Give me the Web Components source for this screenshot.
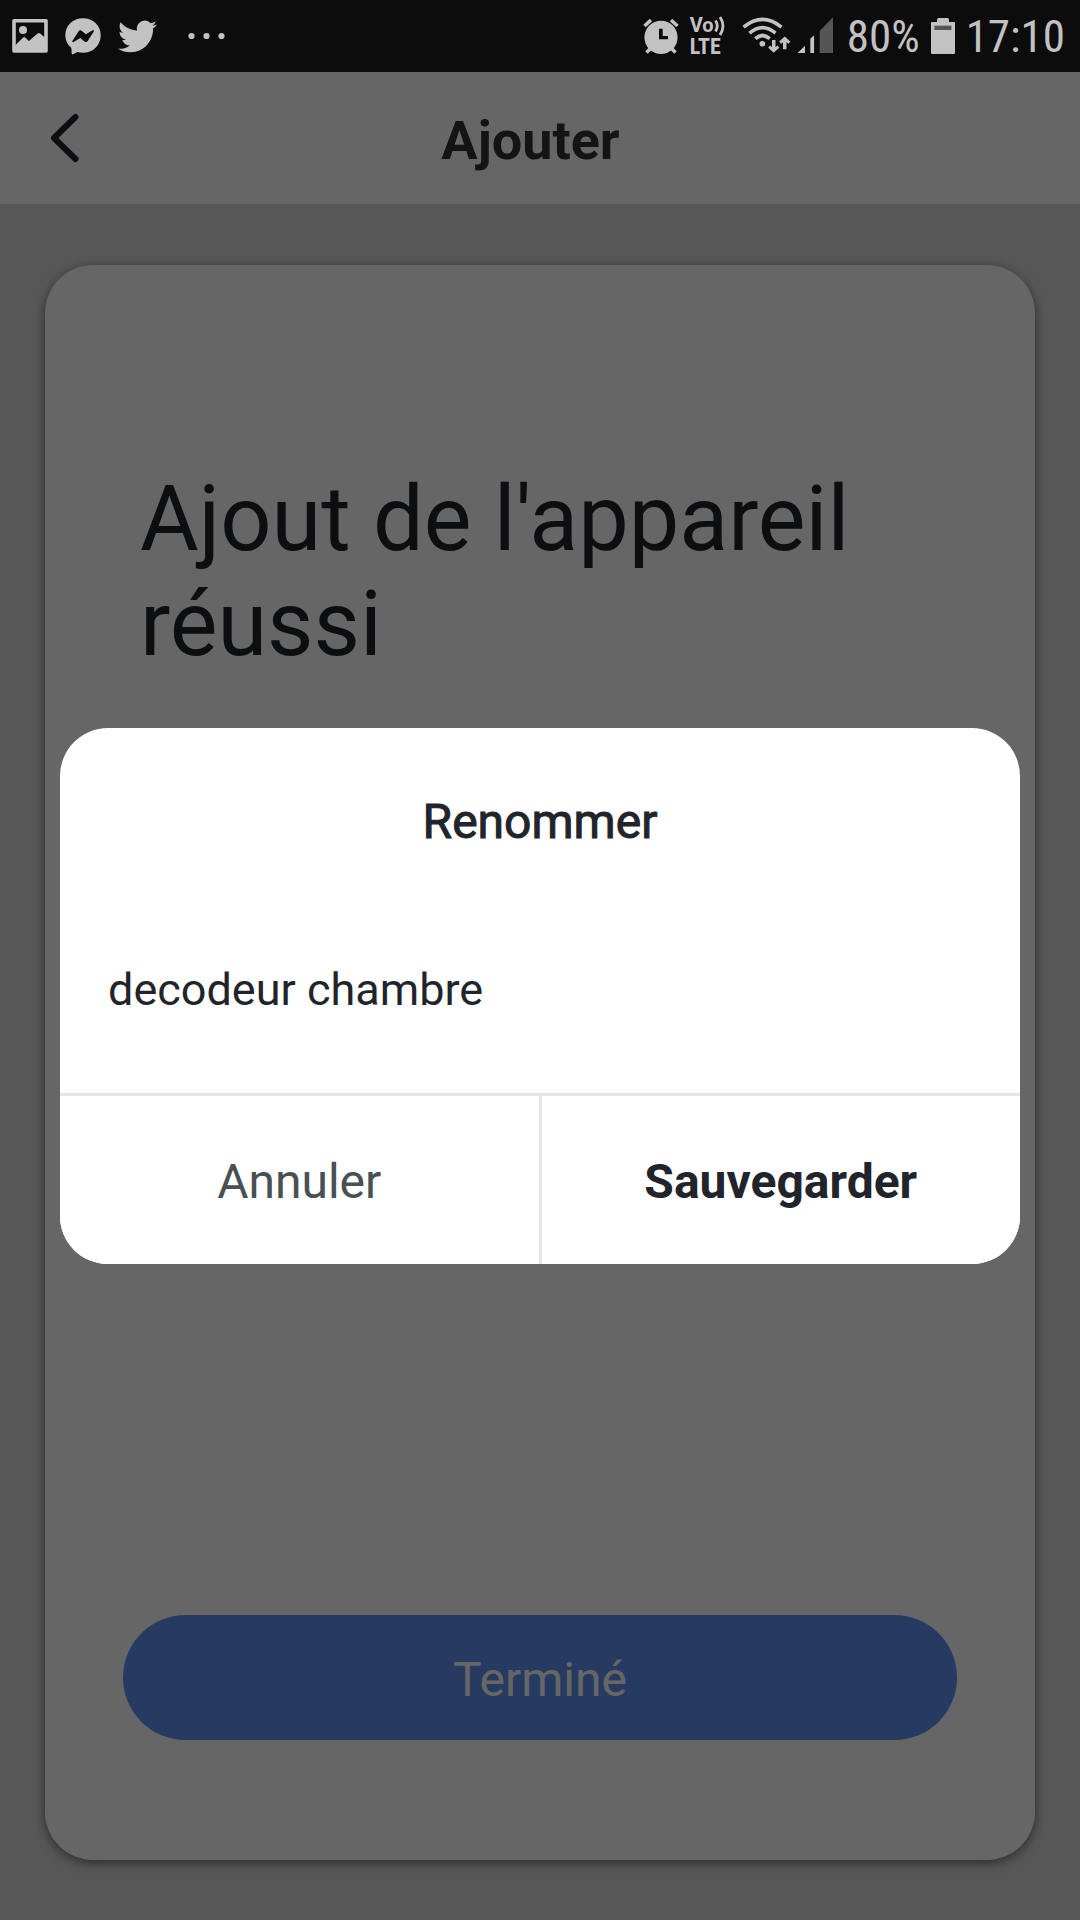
<!DOCTYPE html>
<html lang="fr">
<head>
<meta charset="utf-8">
<meta name="viewport" content="width=device-width, initial-scale=1">
<title>Ajouter</title>
<style>
  html, body { margin: 0; }
  body { font-family: Roboto, "Noto Sans", sans-serif; color: #22242c; }
</style>
</head>
<body>
<app-screen>
  <status-bar slot="status" battery="80%" time="17:10"></status-bar>
  <nav-header slot="header">Ajouter</nav-header>
  <result-card action="Terminé">Ajout de l'appareil réussi</result-card>
  <rename-dialog slot="overlay" value="decodeur chambre" cancel="Annuler" confirm="Sauvegarder">Renommer</rename-dialog>
</app-screen>

<script>
const define = (name, render) => customElements.define(name, class extends HTMLElement {
  constructor() {
    super();
    this.attachShadow({ mode: 'open' });
  }
  connectedCallback() {
    this.shadowRoot.innerHTML = render(this);
  }
});

define('app-screen', () => `
  <style>
    :host { display: flex; flex-direction: column; min-height: 100vh; background: #dadada; }
    .stage { flex: 1; display: grid; }
    .page, .scrim { grid-area: 1 / 1; }
    .page { display: flex; flex-direction: column; }
    main { flex: 1; display: flex; flex-direction: column; padding: 61px 45px 60px; }
    main ::slotted(*) { flex: 1; }
    .scrim { z-index: 1; display: flex; flex-direction: column; justify-content: center; padding: 0 60px; background: rgba(0, 0, 0, .6); }
  </style>
  <slot name="status"></slot>
  <div class="stage">
    <div class="page">
      <slot name="header"></slot>
      <main><slot></slot></main>
    </div>
    <div class="scrim"><slot name="overlay"></slot></div>
  </div>`);

define('status-bar', el => `
  <style>
    :host { display: flex; justify-content: space-between; align-items: center; height: 72px; padding: 0 15px 0 12px; background: #0c0c0c; color: #c2c2c2; }
    .group { display: flex; align-items: center; }
    .apps { gap: 17px; }
    .system { gap: 11px; }
    svg { display: block; flex: none; fill: currentColor; overflow: visible; }
    .line { fill: none; stroke: currentColor; stroke-width: 3.6; }
    .dim { fill: #555; }
    .hole { fill: #0c0c0c; }
    .more { margin-left: 14px; }
    .volte { width: 36px; font-size: 20px; font-weight: 700; line-height: 21px; }
    .volte span { display: flex; align-items: center; }
    .volte .lte { font-family: "Roboto Condensed", Roboto, sans-serif; font-size: 22px; }
    .text { font-family: "Roboto Condensed", Roboto, sans-serif; font-size: 45px; line-height: 52px; padding-top: 2px; }
    .wifi { margin-left: 5px; }
    .signal { margin: 0 2px 0 -5px; }
  </style>
  <div class="group apps">
    <svg width="36" height="36" viewBox="0 0 36 36"><path class="line" stroke-linejoin="round" d="M2 2.7h32v30.3H2z"/><circle cx="11" cy="12" r="4"/><path d="M3 27.5l8.2-8q1-.9 2 0l3.7 3.6 8.7-7.6q1.3-1.2 2.6 0l5.3 4.5V34H3z"/></svg>
    <svg width="36" height="36" viewBox="0 0 36 36"><path d="M18 .3C8 .3.3 7.6.3 17.3c0 5.2 2.2 9.500 5.800 12.500.6.5.4 4.400.6 5.800.1.8.6 1 1.300.6l4.500-2.100c1.700.5 3.500.7 5.500.7 10 0 17.700-7.400 17.700-17.500S28 .3 18 .3z"/><path class="hole" d="M7.500 22.800l6-9.400c.8-1.200 2.200-1.400 3.300-.5l4.100 3.300 6.800-3.900c1-.5 1.700.2 1.100 1.200l-6.100 9.400c-.8 1.200-2.200 1.400-3.300.5l-4.100-3.300-6.700 3.900c-1 .5-1.700-.2-1.100-1.200z"/></svg>
    <svg width="39" height="33" viewBox="0 2 24 20"><path d="M23.953 4.570a10 10 0 01-2.825.775 4.958 4.958 0 002.163-2.723c-.951.555-2.005.959-3.127 1.184a4.920 4.920 0 00-8.384 4.482C7.690 8.095 4.067 6.130 1.640 3.162a4.822 4.822 0 00-.666 2.475c0 1.710.870 3.213 2.188 4.096a4.904 4.904 0 01-2.228-.616v.060a4.923 4.923 0 003.946 4.827 4.996 4.996 0 01-2.212.085 4.936 4.936 0 004.604 3.417 9.867 9.867 0 01-6.102 2.105c-.390 0-.779-.023-1.170-.067a13.995 13.995 0 007.557 2.209c9.053 0 13.998-7.496 13.998-13.985 0-.210 0-.420-.015-.630A9.935 9.935 0 0024 4.590z"/></svg>
    <svg class="more" width="38" height="8" viewBox="0 0 38 8"><circle cx="3.500" cy="4" r="3.100"/><circle cx="18.500" cy="4" r="3.100"/><circle cx="33.500" cy="4" r="3.100"/></svg>
  </div>
  <div class="group system">
    <svg width="36" height="36" viewBox="0 0 36 36"><circle cx="18" cy="19.300" r="16.600"/><path class="line" d="M1.500 8L8 2M34.500 8L28 2M3.500 34.500l5-5M32.500 34.500l-5-5"/><path class="hole" d="M16 10.700h3.700v7.300H25v3.300h-9z"/></svg>
    <div class="volte">
      <span>Vo<svg width="12" height="18" viewBox="0 0 12 18"><path class="line" style="stroke-width:2.800" d="M1.500 3.500q3.500 5.500 0 11M6 0q6 9 0 18"/></svg></span>
      <span class="lte">LTE</span>
    </div>
    <svg class="wifi" width="49" height="36" viewBox="0 0 49 36"><path class="line" d="M1.500 9.200Q20.500-6.500 39.500 9.200M7.500 15.200q13-11.200 26 0M13.300 20.700q7.200-6.400 14.400 0"/><circle cx="20.300" cy="25.700" r="2.800"/><path d="M30 22h3.500v7l2-1.500 1.800 2.300-5.600 5-5.500-5 1.800-2.300 2 1.500zM41 31.200h3.500v-7l2 1.500 1.800-2.300-5.600-5-5.500 5 1.800 2.300 2-1.500z"/></svg>
    <svg class="signal" width="37" height="36" viewBox="0 0 37 36"><path d="M.5 35L8 27.800V35zM13.300 35V20.800l3.800-3.600V35z"/><path class="dim" d="M22.700 35V13L36-.8V35z"/></svg>
    <span class="text">${el.getAttribute('battery')}</span>
    <svg width="24" height="36" viewBox="0 0 24 36"><path d="M1 4h5V1.500Q6 0 7.500 0h9Q18 0 18 1.500V4h5q1 0 1 1v30q0 1-1 1H1q-1 0-1-1V5q0-1 1-1z"/><path class="dim" d="M3.400 7.700h17V12h-17z"/></svg>
    <span class="text">${el.getAttribute('time')}</span>
  </div>`);

define('nav-header', () => `
  <style>
    :host { display: grid; grid-template-columns: 128px 1fr 147px; align-items: center; height: 132px; background: #fff; color: #333; }
    button { display: flex; align-items: center; height: 100%; padding: 0 0 0 48px; border: 0; background: none; color: #22242c; }
    svg { display: block; fill: none; stroke: currentColor; stroke-width: 6; stroke-linecap: round; stroke-linejoin: round; }
    h1 { margin: 0; padding-top: 6px; font-size: 54px; line-height: 64px; font-weight: 700; text-align: center; }
  </style>
  <button type="button" aria-label="Retour"><svg width="32" height="50" viewBox="0 0 32 50"><path d="M27.500 4L6 25l21.500 21"/></svg></button>
  <h1><slot></slot></h1>`);

define('result-card', el => `
  <style>
    :host { display: flex; flex-direction: column; justify-content: space-between; padding: 202px 78px 120px; border-radius: 48px; background: #fff; box-shadow: 0 3px 12px rgba(0, 0, 0, .5); }
    h2 { margin: 0; padding: 0 17px; font-size: 90px; line-height: 105px; font-weight: 400; }
    button { height: 125px; padding: 4px 0 0; border: 0; border-radius: 63px; background: #6291f5; color: #fff; font: inherit; font-size: 48px; }
  </style>
  <h2><slot></slot></h2>
  <button type="button">${el.getAttribute('action')}</button>`);

define('rename-dialog', el => `
  <style>
    :host { display: block; border-radius: 48px; background: #fff; overflow: hidden; }
    form { display: flex; flex-direction: column; margin: 0; }
    label { margin: 64px 48px 77px; font-size: 48px; line-height: 60px; text-align: center; -webkit-text-stroke: 1px currentColor; }
    input { height: 120px; margin: 0 0 44px; padding: 0 48px; border: 0; outline: 0; background: none; color: inherit; font: inherit; font-size: 45px; }
    .actions { display: flex; gap: 3px; border-top: 3px solid #e5e5e5; background: #e5e5e5; }
    button { flex: 1; height: 168px; padding: 2px 0 0; border: 0; background: #fff; color: #495054; font: inherit; font-size: 48px; }
    .confirm { color: #22242c; font-weight: 700; }
  </style>
  <form role="dialog" aria-labelledby="title" onsubmit="return false">
    <label id="title" for="name"><slot></slot></label>
    <input id="name" type="text" value="${el.getAttribute('value')}">
    <div class="actions">
      <button type="button">${el.getAttribute('cancel')}</button>
      <button class="confirm" type="submit">${el.getAttribute('confirm')}</button>
    </div>
  </form>`);
</script>
</body>
</html>
